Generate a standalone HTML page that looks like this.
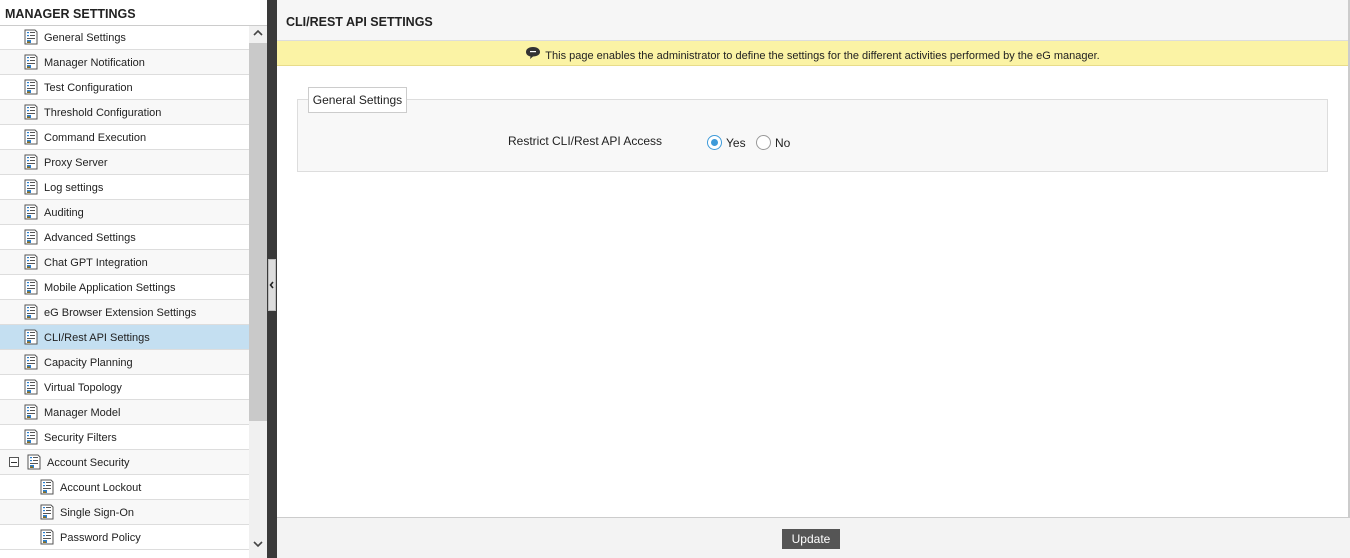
<!DOCTYPE html>
<html><head><style>
*{margin:0;padding:0;box-sizing:border-box}
body{width:1350px;height:558px;overflow:hidden;font-family:"Liberation Sans",Arial,sans-serif;font-size:11px;color:#222;background:#fff;position:relative}
#left{position:absolute;left:0;top:0;width:267px;height:558px;background:#fff}
#lh{height:26px;border-bottom:1px solid #ccc;font-size:12.5px;font-weight:bold;color:#222;padding:7px 0 0 5px}
.row{position:absolute;left:0;width:249px;height:25px;border-bottom:1px solid #ddd;line-height:26px}
.row.alt{background:#f8f8f8}
.row.sel{background:#c4dff1}
.ic{position:absolute;top:4px;width:14px;height:16px}
.row span{position:absolute;top:0}
#sb{position:absolute;left:249px;top:26px;width:18px;height:532px;background:#f0f0f0}
#thumb{position:absolute;left:249px;top:43px;width:18px;height:378px;background:#c9c9c9}
#div{position:absolute;left:267px;top:0;width:10px;height:558px;background:#3a3a3a}
#handle{position:absolute;left:268px;top:259px;width:8px;height:52px;background:#ddd;border:1px solid #bbb}
#right{position:absolute;left:277px;top:0;width:1073px;height:558px;background:#fff;border-right:2px solid #ccc}
#rh{height:41px;background:#f6f6f6;border-bottom:1px solid #ddd;font-size:12.5px;font-weight:bold;padding:15px 0 0 9px}
#yb{height:25px;background:#fbf3a5;border-bottom:1px solid #e8dc8a;text-align:center;font-size:11px;line-height:31px}
#fs{position:absolute;left:20px;top:99px;width:1031px;height:73px;background:#f8f8f8;border:1px solid #ddd}
#lg{position:absolute;left:31px;top:87px;width:99px;height:26px;background:#fff;border:1px solid #ccc;font-size:12px;line-height:25px;text-align:center}
#ft{position:absolute;left:0;top:517px;width:1073px;height:41px;background:#f3f3f3;border-top:1px solid #ccc}
#btn{position:absolute;left:505px;top:11px;width:58px;height:20px;background:#555;color:#fff;font-size:12px;text-align:center;line-height:20px}
.rad{position:absolute;width:15px;height:15px;border-radius:50%;border:1px solid #999;background:#fff}
</style></head><body>
<div id="left">
<div id="lh">MANAGER SETTINGS</div>
</div>
<div id="rows"></div>
<div id="sb"></div><div id="thumb"></div>
<svg style="position:absolute;left:252px;top:29px" width="12" height="8"><path d="M2 6L6 2L10 6" stroke="#444" stroke-width="1.6" fill="none"/></svg>
<svg style="position:absolute;left:252px;top:540px" width="12" height="8"><path d="M2 2L6 6L10 2" stroke="#444" stroke-width="1.6" fill="none"/></svg>
<div id="div"></div><div id="handle"></div>
<svg style="position:absolute;left:269px;top:280px" width="6" height="10"><path d="M4 2L1.5 5L4 8" stroke="#222" stroke-width="1.6" fill="none"/></svg>
<div id="right">
<div id="rh">CLI/REST API SETTINGS</div>
<div id="yb"><svg width="16" height="14" style="vertical-align:-1px;margin-right:4px"><path d="M8 1C3.5 1 1 3.2 1 6c0 2.4 2 4 4.5 4.5L5 13l3-2.5c4 0 7-1.8 7-4.5S12.5 1 8 1z" fill="#333"/><rect x="5" y="5" width="6" height="1.2" fill="#fff"/></svg>This page enables the administrator to define the settings for the different activities performed by the eG manager.</div>
<div id="fs"></div>
<div id="lg">General Settings</div>
<div style="position:absolute;left:231px;top:134px;font-size:12px">Restrict CLI/Rest API Access</div>
<div class="rad" style="left:430px;top:135px;border-color:#3d9ad9"><div style="position:absolute;left:3px;top:3px;width:7px;height:7px;border-radius:50%;background:#3d9ad9"></div></div>
<div style="position:absolute;left:449px;top:136px;font-size:12px">Yes</div>
<div class="rad" style="left:479px;top:135px"></div>
<div style="position:absolute;left:498px;top:136px;font-size:12px">No</div>
<div id="ft"><div id="btn">Update</div></div>
</div>
<script>
var items=[["General Settings",0],["Manager Notification",0],["Test Configuration",0],["Threshold Configuration",0],["Command Execution",0],["Proxy Server",0],["Log settings",0],["Auditing",0],["Advanced Settings",0],["Chat GPT Integration",0],["Mobile Application Settings",0],["eG Browser Extension Settings",0],["CLI/Rest API Settings",0],["Capacity Planning",0],["Virtual Topology",0],["Manager Model",0],["Security Filters",0],["Account Security",2],["Account Lockout",1],["Single Sign-On",1],["Password Policy",1]];
var ic='<svg class="ic" viewBox="0 0 14 16"><path d="M1 1h10l2 2v12H1z" fill="#fff" stroke="#555"/><rect x="3" y="3" width="2" height="1.2" fill="#2a7fd0"/><rect x="6" y="3" width="5" height="1" fill="#555"/><rect x="3" y="6" width="2" height="1.2" fill="#2a7fd0"/><rect x="6" y="6" width="5" height="1" fill="#555"/><rect x="3" y="9" width="8" height="1" fill="#555"/><rect x="3" y="11" width="4" height="3" fill="#2a7fd0"/><rect x="3" y="12.5" width="3" height="1.5" fill="#8a6d1a"/></svg>';
var h='';
items.forEach(function(it,i){
var y=25+i*25;var cls='row'+(i==12?' sel':(i%2?' alt':''));
var ix=it[1]==1?40:(it[1]==2?27:24);var tx=ix+20;
h+='<div class="'+cls+'" style="top:'+y+'px">'+(it[1]==2?'<div style="position:absolute;left:9px;top:7px;width:10px;height:10px;border:1px solid #555;background:#fff"><div style="position:absolute;left:1px;top:3.5px;width:6px;height:1px;background:#333"></div></div>':'')+ic.replace('class="ic"','class="ic" style="left:'+ix+'px"')+'<span style="left:'+tx+'px">'+it[0]+'</span></div>';
});
document.getElementById('rows').innerHTML=h;
</script>
</body></html>
